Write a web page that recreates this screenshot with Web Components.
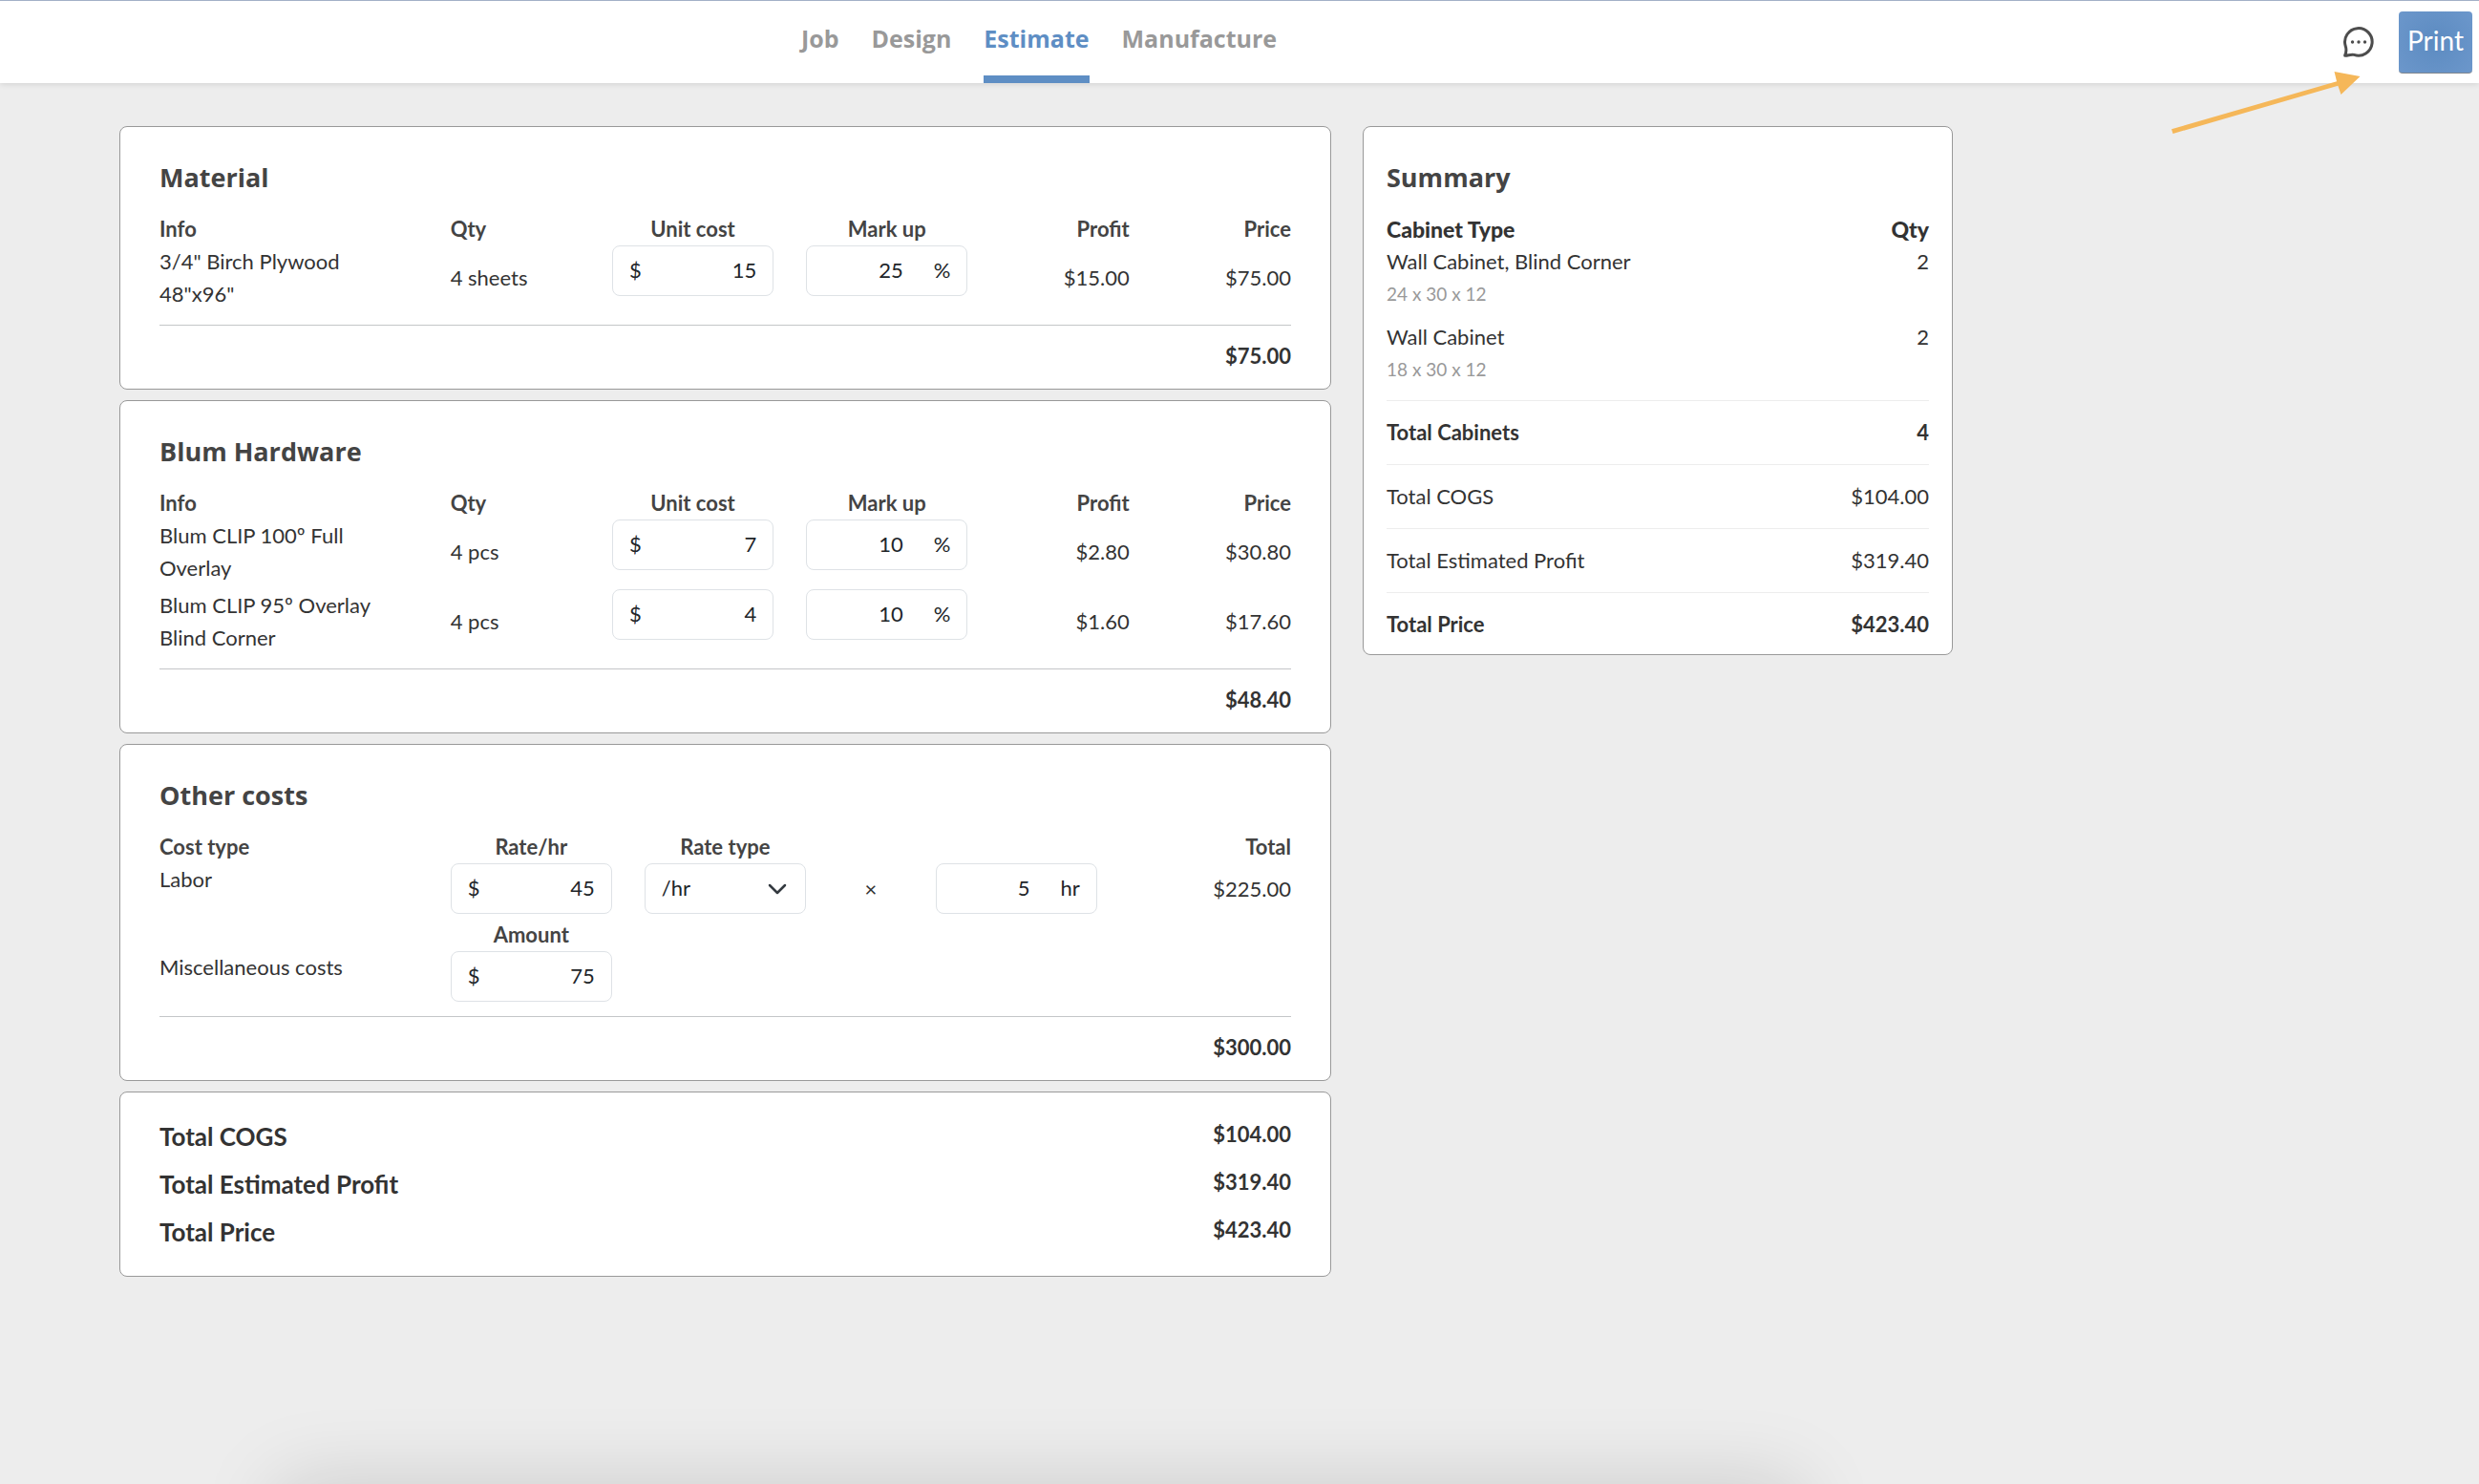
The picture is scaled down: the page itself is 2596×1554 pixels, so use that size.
<!DOCTYPE html>
<html lang="en">
<head>
<meta charset="utf-8">
<title>Estimate</title>
<style>
html, body { margin: 0; height: 100%; }
body { font: 22px/34px Lato, "Liberation Sans", sans-serif; color: #333; background: #ededed; --heading: "Open Sans", Lato, sans-serif; }
</style>
</head>
<body>
<estimate-app></estimate-app>
<script>
const define = (name, css, html) => customElements.define(name, class extends HTMLElement {
  connectedCallback() {
    if (this.shadowRoot) return;
    const root = this.attachShadow({ mode: 'open' });
    const markup = typeof html === 'function' ? html(this) : html;
    root.innerHTML = `<style>*{box-sizing:border-box}${css}</style>${markup}`;
  }
});

/* Bordered box with a number and a unit before or after it */
define('unit-field', `
  :host { display: block; }
  label { display: flex; align-items: center; height: 53px; padding: 0 17px 1px; border: 1px solid #dee2e6; border-radius: 8px; background: #fff; color: #212529; }
  input { flex: 1; min-width: 0; width: 0; padding: 0; border: 0; outline: 0; background: none; font: inherit; color: inherit; text-align: right; }
  .after { padding-left: 32px; }
`, el => {
  const before = el.getAttribute('before'), after = el.getAttribute('after');
  return `<label>${before ? `<span>${before}</span>` : ''}
    <input type="text" inputmode="decimal" aria-label="${el.getAttribute('name')}" value="${el.getAttribute('value')}">
    ${after ? `<span class="after">${after}</span>` : ''}</label>`;
});

define('rate-select', `
  :host { display: grid; align-items: center; }
  select, svg { grid-area: 1 / 1; }
  select { appearance: none; width: 100%; height: 53px; padding: 0 17px 1px; border: 1px solid #dee2e6; border-radius: 8px; background: #fff; font: inherit; color: #212529; }
  svg { justify-self: end; margin-right: 19px; pointer-events: none; }
`, `<select aria-label="Rate type"><option>/hr</option><option>/day</option></select>
  <svg width="22" height="14" viewBox="0 0 22 14" fill="none" stroke="#343a40" stroke-width="2.500" stroke-linecap="round" stroke-linejoin="round"><path d="M3 3l8 8 8-8"/></svg>`);

define('panel-card', `
  :host { display: block; padding: 36px 41px 17px; border: 1px solid #999; border-radius: 8px; background: #fff; }
  :host([narrow]) { padding: 36px 24px 14px; }
  h2 { margin: 0 0 20px; font: 700 27px/34px var(--heading); color: #444; }
`, el => `<h2>${el.getAttribute('heading')}</h2><slot></slot>`);

const tableCss = `
  :host { display: block; }
  table, thead, tbody, tfoot { display: block; }
  tr { display: grid; column-gap: 34px; }
  th, td { padding: 0; font-weight: 400; text-align: left; }
  thead th, .label { font-weight: 700; color: #444; }
  .c { text-align: center; }
  .r { text-align: right; }
  tbody { display: grid; row-gap: 5px; }
  tfoot { margin-top: 15px; padding-top: 15px; border-top: 1px solid #c4c6c8; }
  tfoot tr { display: block; }
  tfoot td { display: block; font-weight: 700; text-align: right; }
`;

/* Items priced by quantity, unit cost and mark up */
define('cost-table', tableCss + `
  tr { grid-template-columns: 2fr 1fr 1.25fr 1.25fr 1fr 1fr; }
  .m { align-self: center; }
`, el => {
  const rows = [...el.querySelectorAll('cost-item')].map(i => i.dataset);
  return `<table>
    <thead><tr><th>Info</th><th>Qty</th><th class="c">Unit cost</th><th class="c">Mark up</th><th class="r">Profit</th><th class="r">Price</th></tr></thead>
    <tbody>${rows.map(d => `<tr>
      <td>${d.info}</td><td class="m">${d.qty}</td>
      <td><unit-field name="Unit cost, ${d.name}" before="$" value="${d.cost}"></unit-field></td>
      <td><unit-field name="Mark up, ${d.name}" after="%" value="${d.markup}"></unit-field></td>
      <td class="r m">${d.profit}</td><td class="r m">${d.price}</td></tr>`).join('')}</tbody>
    <tfoot><tr><td>${el.getAttribute('total')}</td></tr></tfoot>
  </table>`;
});

define('other-costs', tableCss + `
  tr { grid-template-columns: 2fr 1.25fr 1.25fr .5fr 1.25fr 1.25fr; }
  .m { align-self: center; }
  .label { display: block; text-align: center; }
  .end { align-self: end; height: 53px; }
`, `<table>
  <thead><tr><th>Cost type</th><th class="c">Rate/hr</th><th class="c">Rate type</th><th></th><th></th><th class="r">Total</th></tr></thead>
  <tbody>
    <tr><td>Labor</td>
      <td><unit-field name="Rate/hr" before="$" value="45"></unit-field></td>
      <td><rate-select></rate-select></td>
      <td class="c m">×</td>
      <td><unit-field name="Hours" after="hr" value="5"></unit-field></td>
      <td class="r m">$225.00</td></tr>
    <tr><td class="end">Miscellaneous costs</td>
      <td><span class="label">Amount</span><unit-field name="Amount" before="$" value="75"></unit-field></td></tr>
  </tbody>
  <tfoot><tr><td>$300.00</td></tr></tfoot>
</table>`);

define('totals-card', `
  :host { display: block; padding: 27px 41px; border: 1px solid #999; border-radius: 8px; background: #fff; }
  dl { display: grid; gap: 12px; margin: 0; font-weight: 700; }
  div { display: flex; justify-content: space-between; }
  dt { font-size: 26px; line-height: 38px; }
  dd { margin: 0; }
`, `<dl>
  <div><dt>Total COGS</dt><dd>$104.00</dd></div>
  <div><dt>Total Estimated Profit</dt><dd>$319.40</dd></div>
  <div><dt>Total Price</dt><dd>$423.40</dd></div>
</dl>`);

define('summary-table', `
  :host { display: block; }
  table, thead, tbody { display: block; }
  tr { display: flex; justify-content: space-between; }
  th, td { padding: 0; font-weight: 400; text-align: left; }
  thead th { font-size: 23px; font-weight: 900; }
  small { display: block; font-size: 19px; color: #999; }
  .items { display: grid; gap: 11px; padding-bottom: 15px; }
  .totals tr { padding: 16px 0; border-top: 1px solid #ededed; }
  .totals tr:last-child { padding-bottom: 0; }
  .strong * { font-weight: 700; }
`, `<table>
  <thead><tr><th>Cabinet Type</th><th>Qty</th></tr></thead>
  <tbody class="items">
    <tr><td>Wall Cabinet, Blind Corner<small>24 x 30 x 12</small></td><td>2</td></tr>
    <tr><td>Wall Cabinet<small>18 x 30 x 12</small></td><td>2</td></tr>
  </tbody>
  <tbody class="totals">
    <tr class="strong"><th>Total Cabinets</th><td>4</td></tr>
    <tr><th>Total COGS</th><td>$104.00</td></tr>
    <tr><th>Total Estimated Profit</th><td>$319.40</td></tr>
    <tr class="strong"><th>Total Price</th><td>$423.40</td></tr>
  </tbody>
</table>`);

define('app-header', `
  :host { display: flex; position: relative; height: 87px; border-top: 1px solid #a3b0c7; background: #fff; box-shadow: 0 1px 6px rgba(0,0,0,.12); }
  nav { display: flex; justify-content: center; gap: 34px; flex: 0 1 1920px; margin-left: 128px; }
  nav a { padding-top: 22px; border-bottom: 8px solid transparent; font: 700 25px/34px var(--heading); color: #999; text-decoration: none; }
  nav a[aria-current] { color: #5e8ec4; border-color: #5e8ec4; }
  .actions { display: flex; align-items: flex-start; gap: 24px; margin-left: auto; padding: 11px 7px 0 0; }
  button { border: 0; font: inherit; cursor: pointer; }
  .chat { display: grid; place-items: center; width: 36px; height: 64px; padding: 0; background: none; }
  .print { height: 65px; padding: 0 9px 4px; border-radius: 4px; border-bottom: 1px solid #80868e; background: radial-gradient(circle, #5c8bc1, #6c97cb); color: #fff; font-size: 28px; }
  .arrow { position: absolute; right: 123px; top: 72px; z-index: 1; }
`, `<nav aria-label="Steps"><a href="#job">Job</a><a href="#design">Design</a><a href="#estimate" aria-current="page">Estimate</a><a href="#manufacture">Manufacture</a></nav>
  <div class="actions">
    <button class="chat" aria-label="Comments"><svg width="34" height="34" viewBox="0 0 34 34" fill="none" stroke="#4d4d4d" stroke-width="3" stroke-linejoin="round"><path d="M2.6 31.2C4 28 4.300 24.500 3.200 21.200A14.300 14.300 0 1 1 12.200 30.400C9 29.400 5.500 31.500 2.600 31.200Z"/><g fill="#4d4d4d" stroke="none"><circle cx="10.500" cy="17" r="1.700"/><circle cx="17" cy="17" r="1.700"/><circle cx="23.500" cy="17" r="1.700"/></g></svg></button>
    <button class="print">Print</button>
  </div>
  <svg class="arrow" width="200" height="70" viewBox="0 0 200 70" fill="#f5b759"><path d="M1 62.200L174 12.300L171.500 2L198.500 7L178.500 26L175.300 16.800L2.500 67Z"/></svg>`);

define('estimate-app', `
  :host { display: block; position: relative; min-height: 100vh; overflow: hidden; }
  main { display: grid; grid-template-columns: minmax(0, 1269fr) minmax(0, 618fr); column-gap: 33px; align-items: start; max-width: 1920px; margin: 45px 125px 0; }
  .costs { display: grid; gap: 11px; }
  .dock { position: absolute; left: 292px; right: 712px; top: 100%; height: 100px; box-shadow: 0 0 84px rgba(0,0,0,.15); }
`, `<app-header></app-header>
  <main>
    <div class="costs">
      <panel-card heading="Material">
        <cost-table total="$75.00">
          <cost-item data-name="Birch Plywood" data-info="3/4&quot; Birch Plywood<br>48&quot;x96&quot;" data-qty="4 sheets" data-cost="15" data-markup="25" data-profit="$15.00" data-price="$75.00"></cost-item>
        </cost-table>
      </panel-card>
      <panel-card heading="Blum Hardware">
        <cost-table total="$48.40">
          <cost-item data-name="Full Overlay" data-info="Blum CLIP 100º Full Overlay" data-qty="4 pcs" data-cost="7" data-markup="10" data-profit="$2.80" data-price="$30.80"></cost-item>
          <cost-item data-name="Blind Corner" data-info="Blum CLIP 95º Overlay Blind Corner" data-qty="4 pcs" data-cost="4" data-markup="10" data-profit="$1.60" data-price="$17.60"></cost-item>
        </cost-table>
      </panel-card>
      <panel-card heading="Other costs"><other-costs></other-costs></panel-card>
      <totals-card></totals-card>
    </div>
    <panel-card narrow heading="Summary"><summary-table></summary-table></panel-card>
  </main>
  <div class="dock"></div>`);
</script>
</body>
</html>
